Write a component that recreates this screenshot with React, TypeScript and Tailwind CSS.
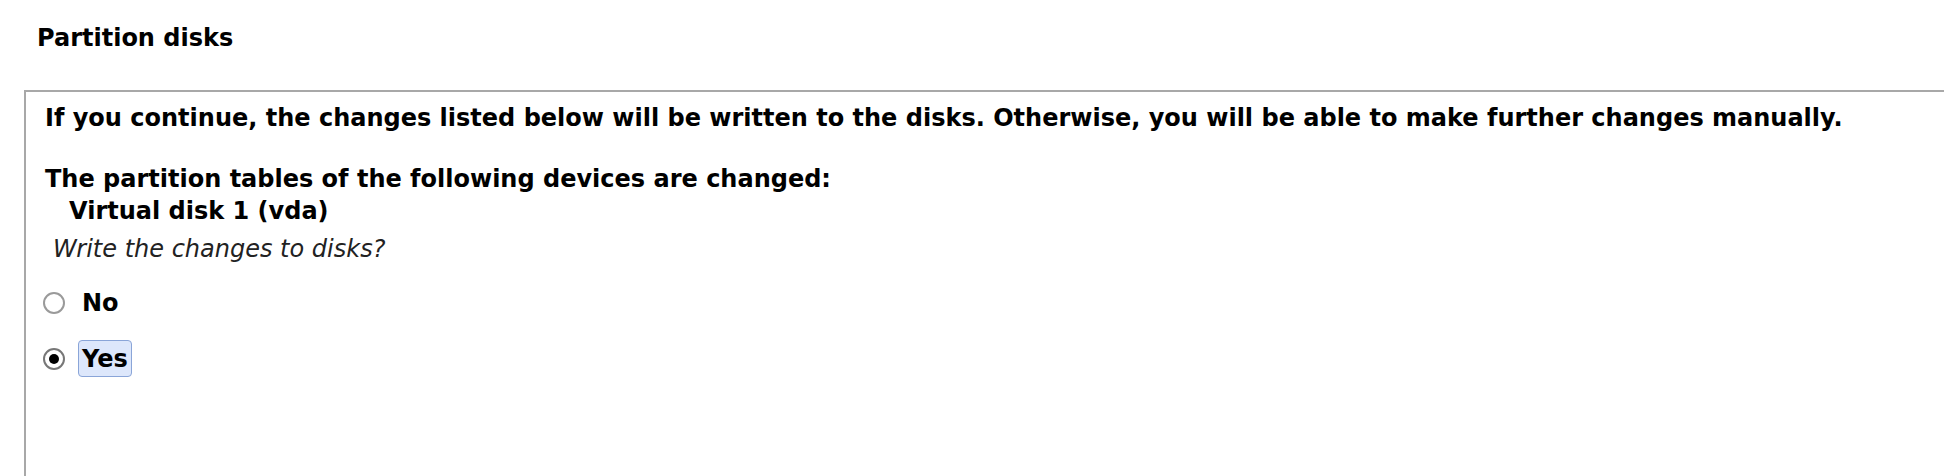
import React from "react";

export default function App() {
  const font = { fontFamily: '"DejaVu Sans", "Liberation Sans", sans-serif' };
  return (
    <div className="w-[1944px] h-[476px] bg-white overflow-hidden flex flex-col text-black" style={font}>
      <div className="pl-[37px] pt-[23px] h-[90px] text-[24px] font-bold leading-[30px]">Partition disks</div>
      <div className="ml-[24px] flex-1 border-t-2 border-l-2 border-[#a8a8a8] pl-[19px] pt-[11px]">
        <p className="text-[24px] font-bold leading-[30px]">
          If you continue, the changes listed below will be written to the disks. Otherwise, you will be able to make further changes manually.
        </p>
        <p className="mt-[30px] text-[24px] font-bold leading-[32px]">The partition tables of the following devices are changed:</p>
        <p className="pl-[24px] text-[24px] font-bold leading-[32px]">Virtual disk 1 (vda)</p>
        <p className="pl-[8px] mt-[7px] text-[24px] italic text-[#222] leading-[30px]">Write the changes to disks?</p>
        <div className="mt-[20px] -ml-[2px] flex items-center h-[37px]">
          <span className="w-[22px] h-[22px] rounded-full border-2 border-[#9a9a9a] bg-white" />
          <span className="ml-[17px] text-[24px] font-bold">No</span>
        </div>
        <div className="mt-[19px] -ml-[2px] flex items-center h-[37px]">
          <span className="w-[22px] h-[22px] rounded-full border-2 border-[#777] bg-white flex items-center justify-center">
            <span className="w-[10px] h-[10px] rounded-full bg-black" />
          </span>
          <span className="ml-[13px] h-[37px] flex items-center px-[3px] text-[24px] font-bold bg-[#dde7fb] border border-[#8aa5d8] rounded-[4px]">Yes</span>
        </div>
      </div>
    </div>
  );
}
